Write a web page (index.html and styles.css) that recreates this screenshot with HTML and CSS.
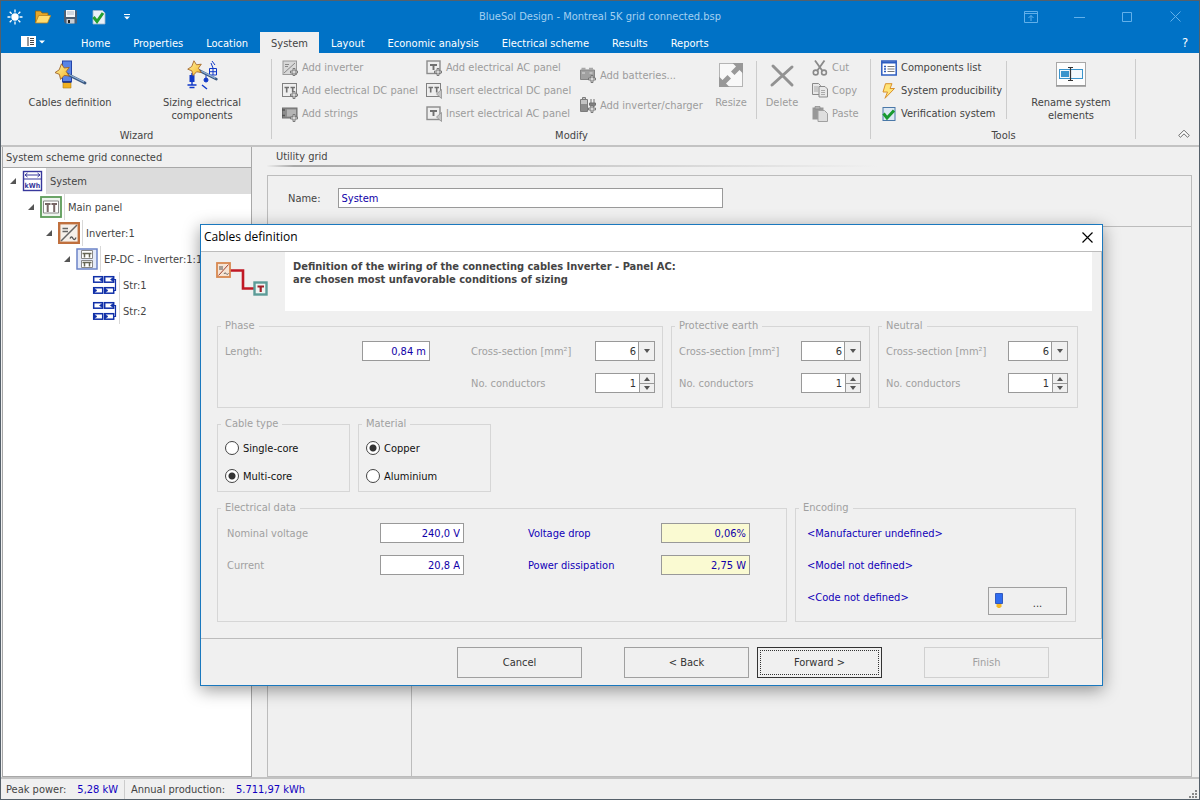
FILE: index.html
```
<!DOCTYPE html>
<html lang="en">
<head>
    <meta charset="UTF-8">
    <meta name="viewport" content="width=device-width, initial-scale=1.0">
    <title>BlueSol Design - Montreal 5K grid connected.bsp</title>
    <link rel="stylesheet" href="styles.css">
</head>
<body>
    <svg class="defs" width="0" height="0" aria-hidden="true">
        <linearGradient id="gold" x1="0" y1="0" x2="1" y2="1">
            <stop offset="0" stop-color="#fff3a0"/>
            <stop offset="1" stop-color="#f4b428"/>
        </linearGradient>
        <symbol id="plus" viewBox="0 0 8 8">
            <path d="M3 .5h2v2.500h2.500v2h-2.500v2.500h-2v-2.500h-2.500v-2h2.500z" fill="#d8d8d8" stroke="#707070" stroke-width=".9"/>
        </symbol>
        <symbol id="insert" viewBox="0 0 6 10">
            <path d="M5.500 .5v9l-5-4.500z" fill="#c4c4c4" stroke="#909090" stroke-width=".8"/>
        </symbol>
        <symbol id="wand" viewBox="0 0 32 22">
            <path d="M12 11l18 9" stroke="#3a5880" stroke-width="2.800" stroke-linecap="round"/>
            <path d="M14 11.500l15 7.500" stroke="#8fb0d8" stroke-width="1.200"/>
            <path d="M6.500 .8l2.700 4.200 5-.6-3 4.200 3 4.400-5-.6-3.600 4-1.200-5-4.400-1.800 4.200-2.800z" fill="url(#gold)" stroke="#a0642a" stroke-width=".9"/>
        </symbol>
        <symbol id="strings" viewBox="0 0 25 20">
            <g fill="#fff" stroke="#1030a8" stroke-width="1.500">
                <rect x="1.700" y="1.700" width="9" height="5.500"/>
                <rect x="12.700" y="1.700" width="9" height="5.500"/>
                <rect x="1.700" y="12.700" width="9" height="5.500"/>
                <rect x="12.700" y="12.700" width="9" height="5.500"/>
            </g>
            <path d="M10.500 2.200v4.500l-3-2.200zM21.500 2.200v4.500l-3-2.200zM2 13.200v4.500l3-2.200zM13 13.200v4.500l3-2.200z" fill="#1030a8" stroke="#1030a8" stroke-width=".6"/>
            <path d="M22 4.500h1.500v11h-1.500" fill="none" stroke="#1030a8" stroke-width="1.200"/>
        </symbol>
        <symbol id="inverter" viewBox="0 0 22 22">
            <rect x="1.200" y="1.200" width="19.600" height="19.600" fill="#f6f0ea" stroke="#c0703e" stroke-width="2.400"/>
            <path d="M3 19L19 3M4.500 6.500h5.500M4.500 9.500h5.500" stroke="#666" stroke-width="1.500"/>
            <path d="M12 16.500c1.500-3 2.500-1 3 0s2 2 3-1" fill="none" stroke="#555" stroke-width="1.300"/>
        </symbol>
    </svg>

    <div class="app">
        <header class="titlebar">
            <div class="quick">
                <svg width="16" height="16" viewBox="0 0 16 16"><circle cx="8" cy="8" r="3.700" fill="#fff"/><path d="M8 .5v3M8 12.500v3M.5 8h3M12.500 8h3M2.700 2.700l2 2M11.300 11.300l2 2M2.700 13.300l2-2M11.300 4.700l2-2" stroke="#fff" stroke-width="1.300"/></svg>
                <svg width="16" height="16" viewBox="0 0 16 16"><path d="M.5 13.500V2h5l1.500 2h6v3" fill="#e8a828" stroke="#8a6414" stroke-width=".8"/><path d="M.5 14L3.700 6.500h12L12.500 14z" fill="#ffdc70" stroke="#b8821c" stroke-width=".8"/></svg>
                <svg width="16" height="16" viewBox="0 0 16 16"><path d="M1 1.500h13v13H2.500L1 13z" fill="#4a5e74"/><rect x="3" y="1" width="9" height="7" fill="#f4f6f8"/><path d="M4 3h7M4 5h7" stroke="#9ab" stroke-width=".8"/><rect x="3.500" y="10" width="8" height="4.500" fill="#c8ccd2"/><rect x="5" y="11" width="2" height="3" fill="#222"/></svg>
                <svg width="16" height="16" viewBox="0 0 16 16"><path d="M2 1.500h9.500L14 4v11H2z" fill="#e9f1f8" stroke="#9db4c8" stroke-width=".8"/><path d="M2.500 8l3.500 4.500L12 4" fill="none" stroke="#22a030" stroke-width="3"/></svg>
                <svg class="quick-more" width="8" height="8" viewBox="0 0 8 8"><path d="M1 1.500h6" stroke="#fff"/><path d="M1 3.500h6L4 6.500z" fill="#fff"/></svg>
            </div>
            <h1>BlueSol Design - Montreal 5K grid connected.bsp</h1>
            <div class="window-buttons">
                <button aria-label="Ribbon display"><svg width="14" height="12" viewBox="0 0 14 12"><path d="M.5 .5h13v11H.5zM.5 2.500h13M7 10V4.500M4.500 7L7 4.500 9.500 7"/></svg></button>
                <button aria-label="Minimize"><svg width="11" height="12" viewBox="0 0 11 12"><path d="M0 6.500h11"/></svg></button>
                <button aria-label="Maximize"><svg width="10" height="10" viewBox="0 0 10 10"><path d="M.5 .5h9v9h-9z"/></svg></button>
                <button aria-label="Close"><svg width="11" height="11" viewBox="0 0 11 11"><path d="M.5 .5l10 10M10.500 .5l-10 10"/></svg></button>
            </div>
        </header>
        <nav class="tabs">
            <button class="app-menu" aria-label="Menu">
                <svg width="26" height="12" viewBox="0 0 26 12"><rect x="0" y="0" width="15" height="11" fill="#fff"/><path d="M7 1v9" stroke="#333"/><path d="M9 2.500h4M9 4.500h4M9 6.500h4M9 8.500h4" stroke="#333" stroke-width=".9"/><path d="M18 4.500h6l-3 3z" fill="#fff"/></svg>
            </button>
            <a href="#">Home</a>
            <a href="#">Properties</a>
            <a href="#">Location</a>
            <a href="#" class="active">System</a>
            <a href="#">Layout</a>
            <a href="#">Economic analysis</a>
            <a href="#">Electrical scheme</a>
            <a href="#">Results</a>
            <a href="#">Reports</a>
            <button class="help">?</button>
        </nav>

        <section class="ribbon">
            <div class="group wizard">
                <div class="group-body">
                    <button class="big">
                        <svg width="34" height="30" viewBox="0 0 34 30"><rect x="9.500" y="1" width="9" height="21" fill="#5a84e4" stroke="#2444a8"/><path d="M10 22.500h8v5.500h-8z" fill="#f0b020" stroke="#b08018" stroke-width=".6"/><path d="M10 22h8" stroke="#1a2c80" stroke-width="1.500"/><use href="#wand" x="2" y="3" width="32" height="22"/></svg>
                        <span>Cables definition</span>
                    </button>
                    <button class="big">
                        <svg width="34" height="30" viewBox="0 0 34 30"><g stroke="#1038c8" fill="none"><path d="M7 13v4M7 21v4M2.500 25h9M4.500 27.500h5M17 25l5 4" stroke-width="1.400"/><rect x="5" y="15.500" width="4" height="6" fill="#1038c8"/><path d="M24.500 8.500h7v6.500h-7zM28 8.500v6.500M24.500 11.700h7M28 8l-2-5M27 1l3 4M21 15v4"/><circle cx="21" cy="20" r="2" fill="#1038c8"/></g><use href="#wand" x="2" y="0" width="32" height="21"/></svg>
                        <span>Sizing electrical<br>components</span>
                    </button>
                </div>
                <h2>Wizard</h2>
            </div>
            <div class="group modify">
                <div class="group-body">
                    <div class="col col-dc">
                        <button class="tool" disabled><svg width="16" height="16" viewBox="0 0 16 16"><rect x="1" y="1" width="13.500" height="13.500" fill="#d8d8d8" stroke="#989898"/><path d="M2 13L13 3M3 4.500h4M3 6.500h3" stroke="#888"/><use href="#plus" x="8" y="8" width="8" height="8"/></svg>Add inverter</button>
                        <button class="tool" disabled><svg width="16" height="16" viewBox="0 0 16 16"><rect x=".5" y=".5" width="14" height="13" fill="#eee" stroke="#808080"/><path d="M2.500 4.500h4.500M4.700 4.500v5M8.500 4.500h4.500M10.700 4.500v5" stroke="#707070" stroke-width="1.600"/><use href="#plus" x="8" y="8" width="8" height="8"/></svg>Add electrical DC panel</button>
                        <button class="tool" disabled><svg width="16" height="16" viewBox="0 0 16 16"><rect x=".5" y="2" width="14.500" height="10" fill="#8c8c8c" stroke="#6c6c6c"/><rect x="5" y="3.500" width="9" height="7" fill="#b4b4b4"/><path d="M0 4h3M0 9.500h3" stroke="#555" stroke-width="1.500"/><use href="#plus" x="8" y="8" width="8" height="8"/></svg>Add strings</button>
                    </div>
                    <div class="col col-ac">
                        <button class="tool" disabled><svg width="16" height="16" viewBox="0 0 16 16"><rect x="1" y="1" width="13" height="12.500" fill="#eee" stroke="#8c8c8c" stroke-width="1.400"/><path d="M4 5h7M7.500 5v5" stroke="#707070" stroke-width="1.900"/><use href="#plus" x="8" y="8" width="8" height="8"/></svg>Add electrical AC panel</button>
                        <button class="tool" disabled><svg width="16" height="16" viewBox="0 0 16 16"><rect x=".5" y=".5" width="14" height="13" fill="#eee" stroke="#808080"/><path d="M2.500 4.500h4.500M4.700 4.500v5M8.500 4.500h4.500M10.700 4.500v5" stroke="#707070" stroke-width="1.600"/><use href="#insert" x="10" y="6" width="6" height="10"/></svg>Insert electrical DC panel</button>
                        <button class="tool" disabled><svg width="16" height="16" viewBox="0 0 16 16"><rect x="1" y="1" width="13" height="12.500" fill="#eee" stroke="#8c8c8c" stroke-width="1.400"/><path d="M4 5h7M7.500 5v5" stroke="#707070" stroke-width="1.900"/><use href="#insert" x="10" y="6" width="6" height="10"/></svg>Insert electrical AC panel</button>
                    </div>
                    <div class="col col-storage">
                        <button class="tool" disabled><svg width="16" height="16" viewBox="0 0 16 16"><path d="M.5 3h14v9.500H.5z" fill="#a0a0a0" stroke="#848484"/><path d="M1.500 .8h4v2.200h-4zM9 .8h4v2.200H9z" fill="#a8a8a8"/><path d="M2 6h3M9.500 6h3" stroke="#ddd"/><use href="#plus" x="8" y="8" width="8" height="8"/></svg>Add batteries...</button>
                        <button class="tool" disabled><svg width="16" height="16" viewBox="0 0 16 16"><path d="M.5 2.500h7v12h-7zM2.500 .5h3v2h-3z" fill="#c4c4c4" stroke="#7c7c7c"/><path d="M1 7h6v7H1z" fill="#8c8c8c"/><path d="M11 2v4M14 2v4M9.500 6h6v2l-2 2h-2l-2-2z" fill="#808080" stroke="#707070"/><use href="#plus" x="8" y="8" width="8" height="8"/></svg>Add inverter/charger</button>
                    </div>
                    <button class="big resize" disabled>
                        <svg width="26" height="30" viewBox="0 0 26 30"><rect x="1.500" y="3.500" width="23" height="23" fill="#f8f8f8" stroke="#b4b4b4"/><path d="M14.500 3H25v10.500l-3.500-3.500-5 5-3.500-3.500 5-5zM1 16.500l3.500 3.500 5-5 3.500 3.500-5 5 3.500 3.500H1z" fill="#989898"/></svg>
                        <span>Resize</span>
                    </button>
                    <div class="divider"></div>
                    <button class="big delete" disabled>
                        <svg width="26" height="30" viewBox="0 0 26 30"><path d="M4 6l19 19M23 7L3 25" stroke="#929292" stroke-width="3" stroke-linecap="round"/></svg>
                        <span>Delete</span>
                    </button>
                    <div class="col col-clip">
                        <button class="tool" disabled><svg width="16" height="16" viewBox="0 0 16 16"><path d="M3 .5l7.500 10.500M12.500 .5l-7.500 10.500" stroke="#8a8a8a" stroke-width="1.800"/><circle cx="3.700" cy="12.500" r="2.400" fill="none" stroke="#8a8a8a" stroke-width="1.600"/><circle cx="12" cy="12.500" r="2.400" fill="none" stroke="#8a8a8a" stroke-width="1.600"/></svg>Cut</button>
                        <button class="tool" disabled><svg width="16" height="16" viewBox="0 0 16 16"><path d="M.5 .5h6l2 2v9h-8z" fill="#e8e8e8" stroke="#8a8a8a"/><path d="M2 4h4M2 6h4M2 8h4" stroke="#aaa"/><path d="M7 3.500h6l2.500 2.500v8H7z" fill="#e8e8e8" stroke="#8a8a8a"/><path d="M9 7.500h4M9 9.500h4M9 11.500h4" stroke="#aaa"/></svg>Copy</button>
                        <button class="tool" disabled><svg width="16" height="16" viewBox="0 0 16 16"><path d="M.5 1.500h11v12H.5z" fill="#989898"/><path d="M3 .5h5v2.500H3z" fill="#b4b4b4" stroke="#888" stroke-width=".7"/><path d="M6 4.500h6.500l3 3v8H6z" fill="#dedede" stroke="#a0a0a0"/></svg>Paste</button>
                    </div>
                </div>
                <h2>Modify</h2>
            </div>
            <div class="group tools">
                <div class="group-body">
                    <div class="col col-list">
                        <button class="tool"><svg width="16" height="16" viewBox="0 0 16 16"><rect x=".8" y="1" width="14.400" height="14" fill="#fff" stroke="#2c5cc0" stroke-width="1.500"/><path d="M1 2.500h14" stroke="#2c5cc0" stroke-width="2"/><path d="M3 6.500h2M3 9h2M3 11.500h2" stroke="#2c5cc0" stroke-width="1.300"/><path d="M6.500 6.500h7M6.500 9h7M6.500 11.500h7" stroke="#777"/></svg>Components list</button>
                        <button class="tool"><svg width="16" height="16" viewBox="0 0 16 16"><path d="M4.500 .7h6.500L9 5.500h4.500L4 15.300 6.500 9H2z" fill="#ffe478" stroke="#d8902c"/></svg>System producibility</button>
                        <button class="tool"><svg width="16" height="16" viewBox="0 0 16 16"><rect x="2" y="1.500" width="12" height="13" fill="#dce8f4" stroke="#4a78a8"/><path d="M2.500 7.500l3.500 4.500L13 4.500" fill="none" stroke="#189a30" stroke-width="3"/></svg>Verification system</button>
                    </div>
                    <div class="divider"></div>
                    <button class="big rename">
                        <svg width="32" height="30" viewBox="0 0 32 30"><rect x="1.500" y="2.500" width="29" height="23" fill="#fdfdfd" stroke="#a8a8a8"/><path d="M1 26h30" stroke="#949494" stroke-width="1.500"/><rect x="4.500" y="9.500" width="23" height="9" fill="#f2f8fc" stroke="#3a94cc"/><rect x="6" y="11" width="8" height="6" fill="#3a94cc"/><path d="M13 7.500h5M13 20.500h5M15.500 7.500v13" stroke="#333" stroke-width="1.200"/></svg>
                        <span>Rename system<br>elements</span>
                    </button>
                </div>
                <h2>Tools</h2>
            </div>
            <button class="collapse" aria-label="Collapse the ribbon"><svg width="12" height="10" viewBox="0 0 12 10"><path d="M.7 6.500L6 1.200l5.300 5.300L9.500 8.200 6 4.800 2.500 8.200z" fill="#fff" stroke="#666"/></svg></button>
        </section>

        <main class="workspace">
            <aside class="tree">
                <h2>System scheme grid connected</h2>
                <ul>
                    <li class="selected">
                        <i class="open"></i>
                        <svg width="22" height="22" viewBox="0 0 22 22"><rect x="1.500" y="1.500" width="18" height="19" fill="#fff" stroke="#38389c" stroke-width="1.400"/><path d="M1.500 9h18M3 5h15M5.500 3L3 5l2.500 2M15.500 3L18 5l-2.500 2" fill="none" stroke="#38389c"/><text x="2.500" y="18" class="kwh">kWh</text></svg>
                        <span>System</span>
                    </li>
                    <li class="level-1">
                        <i class="open"></i>
                        <svg width="22" height="22" viewBox="0 0 22 22"><rect x="1" y="1" width="20" height="20" fill="#eef4ee" stroke="#5c9c58" stroke-width="1.800"/><path d="M3.500 5h15v12h-15z" fill="#fff" stroke="#888"/><path d="M5 8h5.500M7.700 8v8M11.500 8h5.500M14.200 8v8" stroke="#766" stroke-width="2"/></svg>
                        <span>Main panel</span>
                    </li>
                    <li class="level-2">
                        <i class="open"></i>
                        <svg width="22" height="22"><use href="#inverter" width="22" height="22"/></svg>
                        <span>Inverter:1</span>
                    </li>
                    <li class="level-3">
                        <i class="open"></i>
                        <svg width="22" height="22" viewBox="0 0 22 22"><rect x="1" y="1" width="20" height="20" fill="#e4eaf8" stroke="#6c84c8" stroke-width="1.500"/><path d="M5.500 2.500h11v8h-11zM5.500 12.500h11v7h-11z" fill="#fff" stroke="#888"/><path d="M6.500 5.500h9M8.500 5.500v4M13.500 5.500v4M6.500 14.500h9M8.500 14.500v4M13.500 14.500v4" stroke="#665" stroke-width="1.500"/></svg>
                        <span>EP-DC - Inverter:1:1</span>
                    </li>
                    <li class="level-4">
                        <svg width="25" height="20"><use href="#strings" width="25" height="20"/></svg>
                        <span>Str:1</span>
                    </li>
                    <li class="level-4">
                        <svg width="25" height="20"><use href="#strings" width="25" height="20"/></svg>
                        <span>Str:2</span>
                    </li>
                </ul>
            </aside>
            <section class="detail">
                <h2>Utility grid</h2>
                <div class="detail-panel">
                    <div class="name-row">
                        <label for="name">Name:</label>
                        <input type="text" id="name" value="System">
                    </div>
                    <div class="detail-nav"></div>
                </div>
            </section>
        </main>

        <footer class="status">
            <span>Peak power:</span>
            <b>5,28 kW</b>
            <span class="status-next">Annual production:</span>
            <b>5.711,97 kWh</b>
            <svg class="grip" width="8" height="8" viewBox="0 0 8 8"><path d="M6 0h2v2H6zM3 3h2v2H3zM6 3h2v2H6zM0 6h2v2H0zM3 6h2v2H3zM6 6h2v2H6z" fill="#888"/></svg>
        </footer>

        <form class="dialog" role="dialog" aria-labelledby="dialog-title">
            <div class="dialog-title">
                <h2 id="dialog-title">Cables definition</h2>
                <button type="button" aria-label="Close"><svg width="11" height="11" viewBox="0 0 11 11"><path d="M.5 .5l10 10M10.500 .5l-10 10" stroke="#000" stroke-width="1.200"/></svg></button>
            </div>
            <div class="dialog-body">
                <div class="banner">
                    <svg width="54" height="36" viewBox="0 0 54 36"><path d="M14 8.500h13v18h11" fill="none" stroke="#c01824" stroke-width="2.600"/><rect x="1" y="1" width="13" height="14" fill="#f6e4d4" stroke="#d88850" stroke-width="1.800"/><path d="M2.500 13.500l10-11" stroke="#a04030"/><path d="M3 5h4M3 7h4M8 12c1-2 2-.5 2.500 0s1 .5 2-.5" fill="none" stroke="#555"/><rect x="38.500" y="20.500" width="12" height="12" fill="#eef4f2" stroke="#5c9c98" stroke-width="2.400"/><path d="M41.500 24.500h6.500M44.700 24.500v5.500" stroke="#a02028" stroke-width="2.200"/></svg>
                    <p>Definition of the wiring of the connecting cables Inverter - Panel AC:<br>are chosen most unfavorable conditions of sizing</p>
                </div>
                <div class="sets sets-section">
                    <fieldset>
                        <legend>Phase</legend>
                        <div class="fields phase-fields">
                            <label for="length">Length:</label>
                            <input type="text" id="length" class="length" value="0,84 m">
                            <label for="phase-section">Cross-section [mm²]</label>
                            <div class="combo"><select id="phase-section"><option>6</option></select></div>
                            <label for="phase-number" class="second-label">No. conductors</label>
                            <div class="spin"><input type="text" inputmode="numeric" id="phase-number" value="1"><button type="button" aria-label="More"></button><button type="button" aria-label="Less" class="down"></button></div>
                        </div>
                    </fieldset>
                    <fieldset>
                        <legend>Protective earth</legend>
                        <div class="fields">
                            <label for="earth-section">Cross-section [mm²]</label>
                            <div class="combo"><select id="earth-section"><option>6</option></select></div>
                            <label for="earth-number">No. conductors</label>
                            <div class="spin"><input type="text" inputmode="numeric" id="earth-number" value="1"><button type="button" aria-label="More"></button><button type="button" aria-label="Less" class="down"></button></div>
                        </div>
                    </fieldset>
                    <fieldset>
                        <legend>Neutral</legend>
                        <div class="fields">
                            <label for="neutral-section">Cross-section [mm²]</label>
                            <div class="combo"><select id="neutral-section"><option>6</option></select></div>
                            <label for="neutral-number">No. conductors</label>
                            <div class="spin"><input type="text" inputmode="numeric" id="neutral-number" value="1"><button type="button" aria-label="More"></button><button type="button" aria-label="Less" class="down"></button></div>
                        </div>
                    </fieldset>
                </div>
                <div class="sets sets-choice">
                    <fieldset>
                        <legend>Cable type</legend>
                        <div class="radios">
                            <label><input type="radio" name="cable"> Single-core</label>
                            <label><input type="radio" name="cable" checked> Multi-core</label>
                        </div>
                    </fieldset>
                    <fieldset>
                        <legend>Material</legend>
                        <div class="radios">
                            <label><input type="radio" name="material" checked> Copper</label>
                            <label><input type="radio" name="material"> Aluminium</label>
                        </div>
                    </fieldset>
                </div>
                <div class="sets sets-data">
                    <fieldset>
                        <legend>Electrical data</legend>
                        <div class="fields data-fields">
                            <label for="voltage">Nominal voltage</label>
                            <input type="text" id="voltage" value="240,0 V">
                            <label for="drop" class="result-label">Voltage drop</label>
                            <input type="text" id="drop" class="result" value="0,06%" readonly>
                            <label for="current">Current</label>
                            <input type="text" id="current" value="20,8 A">
                            <label for="dissipation" class="result-label">Power dissipation</label>
                            <input type="text" id="dissipation" class="result" value="2,75 W" readonly>
                        </div>
                    </fieldset>
                    <fieldset>
                        <legend>Encoding</legend>
                        <div class="fields encoding">
                            <span>&lt;Manufacturer undefined&gt;</span>
                            <span>&lt;Model not defined&gt;</span>
                            <span>&lt;Code not defined&gt;</span>
                            <button type="button" class="browse"><svg width="8" height="16" viewBox="0 0 8 16"><path d="M.5 .5h7v10h-7z" fill="#2f6cf0" stroke="#1c44b0" stroke-width=".8"/><path d="M1.500 11h5v2.500l-1.500 1.500h-2l-1.500-1.500z" fill="#f4b828"/></svg><span>...</span></button>
                        </div>
                    </fieldset>
                </div>
            </div>
            <div class="dialog-buttons">
                <button type="button">Cancel</button>
                <button type="button" class="back">&lt; Back</button>
                <button type="button" class="forward">Forward &gt;</button>
                <button type="button" class="finish" disabled>Finish</button>
            </div>
        </form>
    </div>
</body>
</html>
```
FILE: styles.css
```
* {
    box-sizing: border-box;
}

body {
    margin: 0;
    font: 11px/13px "DejaVu Sans Condensed", "DejaVu Sans", sans-serif;
    color: #444444;
    background-color: #f0f0f0;
}

h1, h2, p, ul {
    margin: 0;
    padding: 0;
    font-size: 11px;
    font-weight: normal;
}

button, input, select {
    font: inherit;
    color: inherit;
    margin: 0;
    padding: 0;
}

button {
    border: none;
    background: none;
}

a {
    color: inherit;
    text-decoration: none;
}

svg {
    flex-shrink: 0;
}

.defs {
    position: absolute;
}

.app {
    position: relative;
    display: flex;
    flex-direction: column;
    min-height: 100vh;
    border: 1px solid #55606a;
    overflow: hidden;
}

/* Title bar and tabs */
.titlebar {
    display: grid;
    grid-template-columns: 1fr auto 1fr;
    align-items: center;
    height: 31px;
    background-color: #0072c6;
    color: #a4d0f0;
}

.quick {
    display: flex;
    align-items: center;
    gap: 12px;
    padding-left: 6px;
}

.quick-more {
    margin-left: 4px;
}

.window-buttons {
    display: flex;
    justify-content: flex-end;
}

.window-buttons button {
    display: flex;
    align-items: center;
    justify-content: center;
    width: 48px;
    height: 30px;
}

.window-buttons path {
    fill: none;
    stroke: #62b0ea;
}

.tabs {
    display: flex;
    gap: 1px;
    height: 21px;
    background-color: #0072c6;
    color: #ffffff;
}

.tabs a {
    padding: 5px 11px 3px;
}

.tabs a.active {
    background-color: #f0f0f0;
    color: #444444;
}

.app-menu {
    width: 68px;
    padding: 2px 0 0 20px;
    text-align: left;
}

.help {
    margin-left: auto;
    width: 28px;
    font-size: 13px;
}

/* Ribbon */
.ribbon {
    display: flex;
    height: 94px;
    border-bottom: 2px solid #c3c3c3;
}

.group {
    position: relative;
    display: flex;
    flex-direction: column;
    padding-top: 3px;
}

.group::after {
    content: "";
    position: absolute;
    right: 0;
    top: 6px;
    bottom: 6px;
    width: 1px;
    background-color: #cccccc;
}

.wizard {
    width: 271px;
}

.modify {
    width: 599px;
}

.tools {
    width: 265px;
}

.group h2 {
    margin: auto 0 3px;
    text-align: center;
}

.group-body {
    display: flex;
}

.big {
    display: flex;
    flex-direction: column;
    align-items: center;
    gap: 6px;
    padding-top: 4px;
}

.wizard .big {
    width: 138px;
}

.wizard .big + .big {
    width: 126px;
}

.big.resize, .big.delete {
    width: 50px;
}

.big.rename {
    width: 128px;
}

button:disabled {
    color: #9c9c9c;
}

.col {
    padding-left: 10px;
    white-space: nowrap;
}

.col-dc {
    width: 154px;
}

.col-ac {
    width: 154px;
    padding-left: 0;
}

.col-storage {
    width: 126px;
    padding: 4px 0 0;
}

.col-storage .tool {
    height: 30px;
}

.col-clip {
    padding-left: 5px;
}

.col-list {
    width: 135px;
}

.tool {
    display: flex;
    align-items: center;
    gap: 4px;
    height: 23px;
}

.divider {
    width: 1px;
    height: 58px;
    margin-top: 5px;
    background-color: #cccccc;
}

.collapse {
    margin: auto 9px 3px auto;
}

/* Tree and detail */
.workspace {
    display: flex;
    flex: 1;
}

.tree {
    width: 250px;
    margin-left: 1px;
    background-color: #ffffff;
    border: 1px solid #a8a8a8;
    border-top: none;
}

.tree h2 {
    padding: 4px 3px 3px;
    background-color: #f0f0f0;
    border-bottom: 1px solid #a8a8a8;
}

.tree ul {
    list-style: none;
}

.tree li {
    display: flex;
    align-items: center;
    height: 26px;
    padding-left: 7px;
    white-space: nowrap;
}

.tree li span {
    flex: 1;
    align-self: stretch;
    margin-left: 2px;
    padding: 7px 0 0 3px;
    border-left: 1px solid #d8d8d8;
}

.tree .selected span {
    background-color: #dcdcdc;
}

.tree .level-1 {
    padding-left: 25px;
}

.tree .level-2 {
    padding-left: 43px;
}

.tree .level-3 {
    padding-left: 61px;
}

.tree .level-4 {
    padding-left: 89px;
}

.open {
    margin-right: 6px;
    border-left: 6px solid transparent;
    border-bottom: 6px solid #555555;
}

.kwh {
    font: bold 7px "DejaVu Sans Condensed", sans-serif;
    fill: #38389c;
}

.detail {
    flex: 1;
    display: flex;
    flex-direction: column;
    padding: 3px 7px 0 15px;
}

.detail > h2 {
    padding: 0 9px 2px;
    margin-bottom: 8px;
    border-bottom: 2px solid;
    border-image: linear-gradient(90deg, #f0f0f0, #a8a8a8 3%, #f0f0f0 66%) 1;
}

.detail-panel {
    flex: 1;
    display: flex;
    flex-direction: column;
    border: 1px solid #bcbcbc;
}

.name-row {
    display: flex;
    align-items: center;
    gap: 17px;
    padding: 12px 20px 18px;
    border-bottom: 1px solid #bcbcbc;
}

.detail-nav {
    flex: 1;
    width: 144px;
    border-right: 1px solid #bcbcbc;
}

input, select {
    height: 20px;
    border: 1px solid #999999;
    border-radius: 0;
    background-color: #ffffff;
    color: #1000a8;
}

#name {
    width: 385px;
    padding: 0 3px;
}

/* Status bar */
.status {
    display: flex;
    align-items: center;
    gap: 11px;
    height: 22px;
    padding: 0 2px 0 5px;
    border-top: 2px solid #c3c3c3;
}

.status b {
    font-weight: normal;
    color: #1000c0;
}

.status-next {
    margin-left: -5px;
    padding: 3px 0 3px 6px;
    border-left: 1px solid #cccccc;
}

.grip {
    margin: auto 0 1px auto;
}

/* Dialog window */
.dialog {
    position: absolute;
    left: 199px;
    top: 223px;
    width: 903px;
    background-color: #f0f0f0;
    border: 1px solid #1a78be;
    box-shadow: 0 4px 16px rgba(0, 0, 0, 0.4);
}

.dialog-title {
    display: flex;
    align-items: center;
    justify-content: space-between;
    height: 26px;
    padding: 0 9px 2px 3px;
    background-color: #ffffff;
    color: #000000;
}

.dialog-title h2 {
    font: 12px/16px "Open Sans", sans-serif;
}

.dialog-title button {
    display: flex;
}

.dialog-body {
    border: solid #bcbcbc;
    border-width: 1px 1px 1px 0;
    padding-bottom: 16px;
}

.banner {
    display: flex;
    height: 59px;
    margin-bottom: 8px;
    padding: 0 9px 0 15px;
}

.banner svg {
    margin-top: 10px;
}

.banner p {
    flex: 1;
    margin-left: 15px;
    padding: 8px;
    background-color: #ffffff;
    font-weight: bold;
}

.sets {
    display: grid;
    gap: 8px;
    padding-left: 16px;
}

.sets + .sets {
    margin-top: 9px;
}

.sets-section {
    grid-template-columns: 446px 199px 200px;
    height: 89px;
}

.sets-choice {
    grid-template-columns: 133px 133px;
    height: 75px;
}

.sets-data {
    grid-template-columns: 570px 281px;
    height: 121px;
}

fieldset {
    min-width: 0;
    margin: 0;
    padding: 0 7px;
    border: 1px solid #d6d6d6;
    color: #a0a0a0;
}

legend {
    height: 14px;
    margin-left: -4px;
    padding: 0 4px;
}

.fields {
    display: grid;
    grid-template-columns: 122px 60px;
    grid-auto-rows: 20px;
    row-gap: 12px;
    align-items: center;
    margin-top: 8px;
}

.phase-fields {
    grid-template-columns: 137px 109px 124px 60px;
}

.second-label {
    grid-column: 3;
}

.fields input {
    width: 84px;
    padding-right: 3px;
    text-align: right;
}

.fields .length {
    width: 68px;
}

.fields .result {
    width: 89px;
    background-color: #fafad2;
}

.result-label {
    color: #1000b8;
}

.data-fields {
    grid-template-columns: 153px 148px 133px 89px;
    margin-left: 2px;
}

.combo {
    position: relative;
}

.combo select {
    appearance: none;
    width: 60px;
    padding-right: 18px;
    color: #333333;
    text-align: right;
    text-align-last: right;
}

.combo::before {
    content: "";
    position: absolute;
    right: 1px;
    top: 1px;
    bottom: 1px;
    width: 15px;
    border-left: 1px solid #999999;
    background-color: #f0f0f0;
    pointer-events: none;
}

.combo::after {
    content: "";
    position: absolute;
    right: 5px;
    top: 8px;
    border: solid transparent;
    border-width: 4px 3px 0;
    border-top-color: #555555;
    pointer-events: none;
}

.spin {
    display: grid;
    grid-template: 9px 9px / 43px 15px;
    height: 20px;
    border: 1px solid #999999;
    background-color: #ffffff;
}

.fields .spin input {
    grid-row: 1 / 3;
    width: 43px;
    height: 18px;
    border: none;
    color: #333333;
}

.spin button {
    display: flex;
    align-items: center;
    justify-content: center;
    border-left: 1px solid #999999;
    background-color: #f0f0f0;
}

.spin .down {
    grid-column: 2;
    border-top: 1px solid #999999;
}

.spin button::before {
    content: "";
    border: solid transparent;
    border-width: 0 3px 4px;
    border-bottom-color: #555555;
}

.spin .down::before {
    border-width: 4px 3px 0;
    border-top-color: #555555;
}

.radios {
    display: grid;
    gap: 8px;
    margin-top: 7px;
}

.radios label {
    display: flex;
    align-items: center;
    gap: 4px;
    height: 20px;
    color: #111111;
}

.radios input {
    appearance: none;
    width: 14px;
    height: 14px;
    border: 1px solid #444444;
    border-radius: 50%;
}

.radios input:checked {
    background-image: radial-gradient(circle, #333333 3px, transparent 4px);
}

.encoding {
    grid-template-columns: 185px 79px;
    color: #1000b8;
}

.encoding > span {
    grid-column: 1;
    padding-left: 4px;
}

.browse, .dialog-buttons button {
    border: 1px solid #a0a0a0;
    color: #333333;
}

.browse {
    display: flex;
    align-items: center;
    grid-row: 3;
    grid-column: 2;
    align-self: start;
    height: 28px;
    padding: 0 6px;
}

.browse span {
    flex: 1;
    padding: 4px 0 0 12px;
}

.dialog-buttons {
    display: flex;
    justify-content: flex-end;
    gap: 8px;
    padding: 8px 53px 7px 0;
}

.dialog-buttons button {
    width: 125px;
    height: 31px;
}

.dialog-buttons .back, .dialog-buttons .finish {
    margin-left: 34px;
}

.dialog-buttons .forward {
    border-color: #333333;
    outline: 1px dotted #333333;
    outline-offset: -4px;
}

.dialog-buttons .finish {
    border-color: #d0d0d0;
    color: #a0a0a0;
}
```
